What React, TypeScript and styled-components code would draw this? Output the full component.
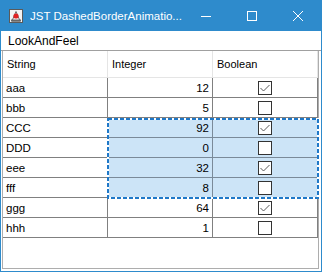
import React from "react";
import styled, { createGlobalStyle } from "styled-components";

const GlobalStyle = createGlobalStyle`
  html, body {
    margin: 0;
    padding: 0;
    background: #ffffff;
  }
  * {
    box-sizing: border-box;
  }
`;

const ACCENT = "#2e8bcc";
const GRID = "#808080";

const Window = styled.div`
  width: 322px;
  height: 272px;
  display: flex;
  flex-direction: column;
  border: 1px solid ${ACCENT};
  border-top: none;
  background: #ffffff;
  font-family: "Liberation Sans", Arial, sans-serif;
  overflow: hidden;
`;

const TitleBar = styled.div`
  height: 31px;
  flex: none;
  display: flex;
  align-items: center;
  background: ${ACCENT};
  color: #ffffff;
`;

const AppIcon = styled.div`
  width: 16px;
  height: 16px;
  margin: 0 6px 0 7px;
  display: flex;
`;

const Title = styled.div`
  flex: 1;
  font-size: 11.5px;
  white-space: nowrap;
  overflow: hidden;
  padding-top: 1px;
`;

const WinButton = styled.div`
  width: 46px;
  height: 31px;
  display: flex;
  align-items: center;
  justify-content: center;
  flex: none;
`;

const MenuBar = styled.div`
  height: 20px;
  flex: none;
  display: flex;
  align-items: center;
  padding-left: 7px;
  font-size: 12px;
  color: #000000;
  border-bottom: 1px solid #a0a0a0;
`;

const Content = styled.div`
  flex: 1;
  display: flex;
  padding: 0 2px 2px 1px;
`;

const ScrollPane = styled.div`
  flex: 1;
  border: 1px solid #adadad;
  border-top: none;
  background: #ffffff;
`;

const Table = styled.div`
  position: relative;
  width: 315px;
`;

const HeaderRow = styled.div`
  display: grid;
  grid-template-columns: 105px 105px 105px;
  height: 27px;
  border-bottom: 1px solid #e5e5e5;
`;

const HeaderCell = styled.div`
  display: flex;
  align-items: center;
  padding-left: 4px;
  font-size: 11px;
  color: #000000;
  border-right: 1px solid #e5e5e5;
`;

const Row = styled.div`
  display: grid;
  grid-template-columns: 105px 105px 105px;
  height: 20px;
`;

const Cell = styled.div<{ $align?: "left" | "right" | "center"; $selected?: boolean }>`
  display: flex;
  align-items: center;
  justify-content: ${(p) =>
    p.$align === "right" ? "flex-end" : p.$align === "center" ? "center" : "flex-start"};
  padding: 0 3px 0 3px;
  font-size: 11.5px;
  color: #000000;
  background: ${(p) => (p.$selected ? "#cce4f7" : "#ffffff")};
  border-right: 1px solid ${(p) => (p.$selected ? "#7a8a99" : GRID)};
  border-bottom: 1px solid ${(p) => (p.$selected ? "#7a8a99" : GRID)};
`;

const Check = styled.div`
  width: 14px;
  height: 14px;
  border: 1px solid #333333;
  background: #ffffff;
  display: flex;
  align-items: center;
  justify-content: center;
`;

const DashedFrame = styled.svg`
  position: absolute;
  pointer-events: none;
`;

const rows = [
  { s: "aaa", i: 12, b: true },
  { s: "bbb", i: 5, b: false },
  { s: "CCC", i: 92, b: true },
  { s: "DDD", i: 0, b: false },
  { s: "eee", i: 32, b: true },
  { s: "fff", i: 8, b: false },
  { s: "ggg", i: 64, b: true },
  { s: "hhh", i: 1, b: false },
];

const selectedRows = [2, 3, 4, 5];

const CheckBox = ({ checked }: { checked: boolean }) => (
  <Check>
    {checked && (
      <svg width="12" height="12" viewBox="0 0 12 12">
        <polyline points="1.5,6 4.5,9 10.5,3" fill="none" stroke="#5a5a5a" strokeWidth="1" />
      </svg>
    )}
  </Check>
);

const App: React.FC = () => {
  const frameTop = 28 + selectedRows[0] * 20 - 1;
  const frameHeight = selectedRows.length * 20 + 1;

  return (
    <>
      <GlobalStyle />
      <Window>
        <TitleBar>
          <AppIcon>
            <svg width="16" height="16" viewBox="0 0 16 16">
              <rect x="1.5" y="1.5" width="13" height="13" fill="#f2f2f2" stroke="#5a5a5a" />
              <path d="M4 13 L8 3.5 L12 13 Z" fill="#ffffff" stroke="#444" strokeWidth="0.8" />
              <circle cx="8" cy="8" r="2.6" fill="#e02020" />
              <rect x="3" y="11.5" width="10" height="2" fill="#666" />
            </svg>
          </AppIcon>
          <Title>JST DashedBorderAnimatio...</Title>
          <WinButton>
            <svg width="10" height="10" viewBox="0 0 10 10">
              <line x1="0" y1="5.5" x2="10" y2="5.5" stroke="#fff" strokeWidth="1" />
            </svg>
          </WinButton>
          <WinButton>
            <svg width="10" height="10" viewBox="0 0 10 10">
              <rect x="0.5" y="0.5" width="9" height="9" fill="none" stroke="#fff" strokeWidth="1" />
            </svg>
          </WinButton>
          <WinButton>
            <svg width="10" height="10" viewBox="0 0 10 10">
              <path d="M0 0 L10 10 M10 0 L0 10" stroke="#fff" strokeWidth="1" />
            </svg>
          </WinButton>
        </TitleBar>
        <MenuBar>LookAndFeel</MenuBar>
        <Content>
          <ScrollPane>
            <Table>
              <HeaderRow>
                <HeaderCell>String</HeaderCell>
                <HeaderCell>Integer</HeaderCell>
                <HeaderCell>Boolean</HeaderCell>
              </HeaderRow>
              {rows.map((r, idx) => {
                const sel = selectedRows.includes(idx);
                return (
                  <Row key={r.s}>
                    <Cell>{r.s}</Cell>
                    <Cell $align="right" $selected={sel}>
                      {r.i}
                    </Cell>
                    <Cell $align="center" $selected={sel}>
                      <CheckBox checked={r.b} />
                    </Cell>
                  </Row>
                );
              })}
              <DashedFrame
                width={212}
                height={frameHeight}
                style={{ left: 104, top: frameTop }}
              >
                <rect x="1" y="1" width={210} height={frameHeight - 2} fill="none" stroke="#ffffff" strokeWidth="2" />
                <rect
                  x="1"
                  y="1"
                  width={210}
                  height={frameHeight - 2}
                  fill="none"
                  stroke="#1f78c8"
                  strokeWidth="2"
                  strokeDasharray="4 2"
                />
              </DashedFrame>
            </Table>
          </ScrollPane>
        </Content>
      </Window>
    </>
  );
};

export default App;
